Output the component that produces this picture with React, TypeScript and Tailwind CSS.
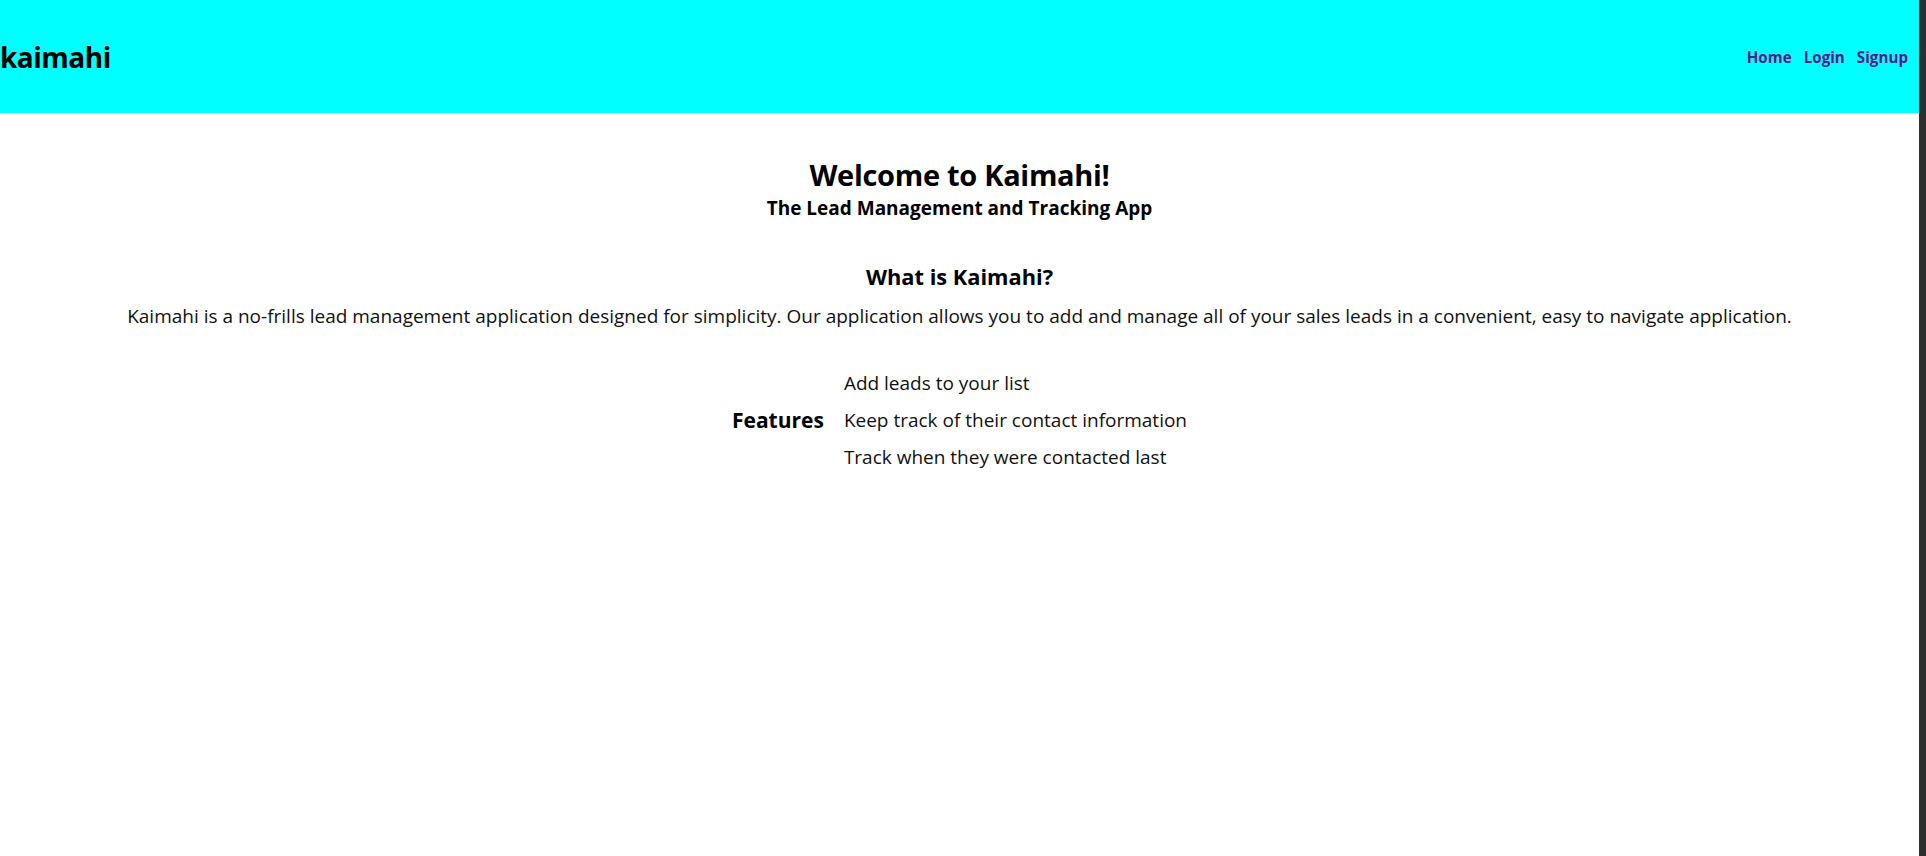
const features = [
  "Add leads to your list",
  "Keep track of their contact information",
  "Track when they were contacted last",
];

export default function App() {
  return (
    <div className="flex min-h-[856px] w-full bg-white font-['Open_Sans',sans-serif] text-black">
      <div className="flex-1">
        <header className="flex h-[113px] items-center justify-between bg-[#00ffff] pr-[11px]">
          <h1 className="text-[28px] font-bold leading-none tracking-[-0.5px]">kaimahi</h1>
          <nav className="mt-[2px] flex gap-[12px] text-[15.2px] font-bold text-[#551a8b]">
            <a href="#">Home</a>
            <a href="#">Login</a>
            <a href="#">Signup</a>
          </nav>
        </header>

        <main className="flex flex-col items-center text-center">
          <h2 className="mt-[43px] text-[29px] font-bold leading-[38px] tracking-[-0.3px]">
            Welcome to Kaimahi!
          </h2>
          <h3 className="text-[19px] font-bold leading-[28px]">
            The Lead Management and Tracking App
          </h3>

          <h3 className="mt-[40px] text-[21.8px] font-bold leading-[30px]">What is Kaimahi?</h3>
          <p className="mt-[9px] text-[19px] leading-[30px] text-[#111]">
            Kaimahi is a no-frills lead management application designed for simplicity. Our
            application allows you to add and manage all of your sales leads in a convenient, easy
            to navigate application.
          </p>

          <div className="mt-[34px] flex items-center gap-[20px]">
            <h4 className="text-[21px] font-bold">Features</h4>
            <ul className="text-left text-[19px] leading-[37px] text-[#111]">
              {features.map((f) => (
                <li key={f}>{f}</li>
              ))}
            </ul>
          </div>
        </main>
      </div>
      <div className="w-[7px] shrink-0 bg-[#2e2e2e]" />
    </div>
  );
}
